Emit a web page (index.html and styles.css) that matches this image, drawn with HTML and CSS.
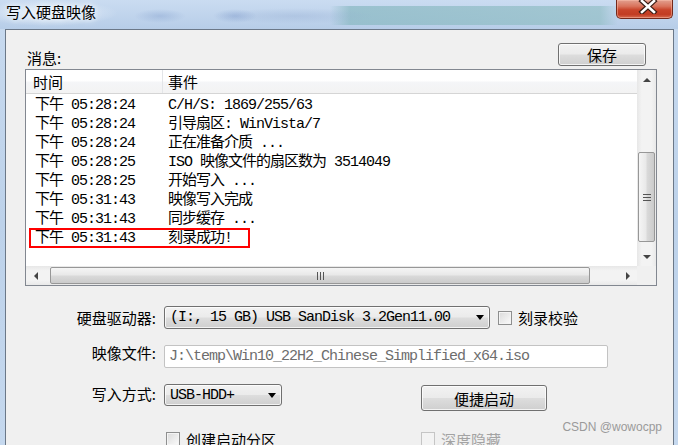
FILE: index.html
```html
<!DOCTYPE html>
<html lang="zh-CN">
<head>
    <meta charset="UTF-8">
    <meta name="viewport" content="width=device-width, initial-scale=1.0">
    <title>写入硬盘映像</title>
    <link rel="stylesheet" href="styles.css">
</head>
<body>

<div class="window">
    <div class="titlebar">
        <span class="title">写入硬盘映像</span>
        <!--close button, the X is drawn twice: dark outline then white-->
        <button class="close">
            <svg width="24" height="14" viewBox="0 0 24 14">
                <path d="M6 1 L18 12 M18 1 L6 12" stroke="#3b1d16" stroke-width="5" stroke-linecap="square"/>
                <path d="M6 1 L18 12 M18 1 L6 12" stroke="#ffffff" stroke-width="2.6" stroke-linecap="square"/>
            </svg>
        </button>
    </div>

    <div class="frame">
        <div class="client">

            <div class="top-row">
                <span class="msg-label">消息:</span>
                <button class="btn save">保存</button>
            </div>

            <div class="listview">
                <div class="list-pane">
                    <div class="list-header">
                        <span class="head-time">时间</span>
                        <span class="head-event">事件</span>
                    </div>
                    <div class="row"><span class="cell-time">下午 05:28:24</span><span>C/H/S: 1869/255/63</span></div>
                    <div class="row"><span class="cell-time">下午 05:28:24</span><span>引导扇区: WinVista/7</span></div>
                    <div class="row"><span class="cell-time">下午 05:28:24</span><span>正在准备介质 ...</span></div>
                    <div class="row"><span class="cell-time">下午 05:28:25</span><span>ISO 映像文件的扇区数为 3514049</span></div>
                    <div class="row"><span class="cell-time">下午 05:28:25</span><span>开始写入 ...</span></div>
                    <div class="row"><span class="cell-time">下午 05:31:43</span><span>映像写入完成</span></div>
                    <div class="row"><span class="cell-time">下午 05:31:43</span><span>同步缓存 ...</span></div>
                    <div class="row marked"><span class="cell-time">下午 05:31:43</span><span>刻录成功!</span></div>
                </div>

                <div class="vscroll">
                    <span class="sb-btn"><i class="tri tri-up"></i></span>
                    <span class="v-track"><span class="thumb v-thumb"><i class="grip-h"></i></span></span>
                    <span class="sb-btn"><i class="tri tri-down"></i></span>
                </div>
                <div class="hscroll">
                    <span class="sb-btn"><i class="tri tri-left"></i></span>
                    <span class="h-track"><span class="thumb h-thumb"><i class="grip-v"></i></span></span>
                    <span class="sb-btn"><i class="tri tri-right"></i></span>
                </div>
                <div class="corner"></div>
            </div>

            <div class="form">
                <span class="field-label">硬盘驱动器:</span>
                <div class="field">
                    <div class="combo combo-drive"><span>(I:, 15 GB) USB SanDisk 3.2Gen11.00</span><i class="arrow"></i></div>
                    <span class="check check-verify"><i class="box"></i>刻录校验</span>
                </div>

                <span class="field-label lift">映像文件:</span>
                <div class="field">
                    <div class="textbox">J:\temp\Win10_22H2_Chinese_Simplified_x64.iso</div>
                </div>

                <span class="field-label lift">写入方式:</span>
                <div class="field field-mode">
                    <div class="combo combo-mode"><span>USB-HDD+</span><i class="arrow"></i></div>
                    <button class="btn quick">便捷启动</button>
                </div>

                <span></span>
                <div class="field field-checks">
                    <span class="check check-boot"><i class="box"></i>创建启动分区</span>
                    <span class="check disabled"><i class="box"></i>深度隐藏</span>
                </div>
            </div>

        </div>
    </div>

    <span class="watermark">CSDN @wowocpp</span>
</div>

</body>
</html>
```

FILE: styles.css
```css
* { box-sizing: border-box; }
body { margin: 0; width: 678px; height: 445px; overflow: hidden; font-family: "Noto Sans CJK SC", sans-serif; font-size: 15px; color: #000; }

/* window frame + aero glass */
.window { position: relative; width: 678px; height: 445px; display: flex; flex-direction: column;
    background: linear-gradient(180deg, #c8daef 0%, #bdd2ea 50%, #c5d8ee 100%); }
.titlebar { height: 29px; flex: none; display: flex; justify-content: space-between; align-items: flex-start;
    background:
        radial-gradient(ellipse 70px 13px at 48px 13px, rgba(236,244,252,0.95), rgba(236,244,252,0)),
        radial-gradient(ellipse 26px 7px at 160px 16px, rgba(120,150,200,0.35), rgba(120,150,200,0)),
        radial-gradient(ellipse 22px 7px at 235px 16px, rgba(110,140,195,0.35), rgba(110,140,195,0)),
        radial-gradient(ellipse 80px 8px at 295px 16px, rgba(140,165,205,0.3), rgba(140,165,205,0)),
        linear-gradient(90deg, rgba(140,186,196,0) 330px, rgba(140,186,196,0.75) 350px, rgba(150,192,200,0.75) 600px, rgba(150,192,200,0) 618px) 0 6px / 100% 19px no-repeat,
        linear-gradient(180deg, #cadcf1 0%, #b7cde8 100%); }
.title { padding-left: 6px; line-height: 24px; font-size: 15px; text-shadow: 0 0 8px #f2f7fd, 0 0 4px #f2f7fd; }
.close { width: 57px; height: 19px; margin-right: 5px; padding: 0; display: flex; justify-content: center; align-items: flex-start;
    border: 1px solid #74291b; border-top: none; border-radius: 0 0 5px 5px;
    background: linear-gradient(180deg, #e2a08f 0%, #d9735c 35%, #c8442a 55%, #c23c22 80%, #d66a4f 100%);
    box-shadow: inset 0 0 0 1px rgba(255,200,180,0.45); }
.close svg { display: block; margin-left: 6px; }

.frame { flex: 1; min-height: 0; display: flex; padding: 0 4px 0 5px; }
.client { flex: 1; display: flex; flex-direction: column; background: #f0f0f0;
    border: 1px solid #6b7888; border-bottom: none; padding: 13px 16px 0 19px; }

/* message header row */
.top-row { height: 23px; display: flex; justify-content: space-between; align-items: flex-end; }
.msg-label { margin-left: 2px; line-height: 17px; }
.btn { font-family: "Noto Sans CJK SC", sans-serif; font-size: 15px; color: #000; padding: 0; line-height: 1;
    border: 1px solid #707070; border-radius: 3px;
    background: linear-gradient(180deg, #f2f2f2 0%, #ebebeb 48%, #dddddd 52%, #cfcfcf 100%);
    box-shadow: inset 0 0 0 1px rgba(255,255,255,0.75); }
.save { width: 88px; height: 23px; margin-right: 11px; }

/* list view */
.listview { margin-top: 3px; height: 217px; flex: none; border: 1px solid #828790; background: #fff;
    display: grid; grid-template-columns: 1fr 19px; grid-template-rows: 1fr 19px; }
.list-pane { overflow: hidden; font-family: "Liberation Mono", "Noto Sans CJK SC", monospace; font-size: 15px; letter-spacing: -1px; }
.list-header { height: 24px; display: flex; border-bottom: 1px solid #d5d5d5; margin-bottom: 2px;
    background: linear-gradient(180deg, #ffffff 0%, #ffffff 45%, #f4f5f7 55%, #f3f3f3 100%);
    font-family: "Noto Sans CJK SC", sans-serif; letter-spacing: 0; line-height: 23px; }
.head-time { width: 137px; padding-left: 7px; border-right: 1px solid #e3e5e8; }
.head-event { padding-left: 5px; }
.row { position: relative; height: 19px; line-height: 20px; display: flex; padding-left: 9px; white-space: nowrap; }
.cell-time { width: 133px; flex: none; }
.row.marked::after { content: ""; position: absolute; left: 3px; top: -1px; width: 217px; height: 16px; border: 2px solid #f00; }

/* scrollbars */
.vscroll { display: flex; flex-direction: column; background: linear-gradient(90deg, #e7e7e7 0%, #f3f3f3 25%, #f3f3f3 75%, #e9e9e9 100%); }
.hscroll { display: flex; background: linear-gradient(180deg, #e7e7e7 0%, #f3f3f3 25%, #f3f3f3 75%, #e9e9e9 100%); }
.corner { background: #f0f0f0; }
.sb-btn { flex: none; width: 19px; height: 19px; display: flex; align-items: center; justify-content: center; }
.tri { display: block; width: 0; height: 0; }
.tri-up { border-left: 4px solid transparent; border-right: 4px solid transparent; border-bottom: 4px solid #444; }
.tri-down { border-left: 4px solid transparent; border-right: 4px solid transparent; border-top: 4px solid #444; }
.tri-left { border-top: 4px solid transparent; border-bottom: 4px solid transparent; border-right: 4px solid #444; }
.tri-right { border-top: 4px solid transparent; border-bottom: 4px solid transparent; border-left: 4px solid #444; }
.v-track { flex: 1; }
.h-track { flex: 1; display: flex; }
.thumb { display: flex; align-items: center; justify-content: center; border: 1px solid #979797; border-radius: 2px; }
.v-thumb { margin: 63px 1px 0; height: 90px;
    background: linear-gradient(90deg, #f5f5f5 0%, #e9e9e9 45%, #d9d9d9 55%, #cbcbcb 100%); }
.h-thumb { margin: 1px 0 1px 5px; width: 540px;
    background: linear-gradient(180deg, #f5f5f5 0%, #e9e9e9 45%, #d9d9d9 55%, #cbcbcb 100%); }
.grip-h { display: block; width: 8px; height: 7px;
    background: repeating-linear-gradient(180deg, #555 0 1px, transparent 1px 3px); }
.grip-v { display: block; width: 7px; height: 8px;
    background: repeating-linear-gradient(90deg, #555 0 1px, transparent 1px 3px); }

/* form below the list */
.form { margin-top: 20px; display: grid; grid-template-columns: 150px 1fr; column-gap: 8px; row-gap: 16px;
    grid-template-rows: 23px 23px 27px auto; margin-left: -19px; }
.field-label { display: flex; align-items: center; justify-content: flex-end; white-space: nowrap; }
.field-label.lift { padding-bottom: 8px; }
.field { display: flex; align-items: center; }
.combo { position: relative; display: flex; align-items: center; padding-left: 5px;
    font-family: "Liberation Mono", "Noto Sans CJK SC", monospace; letter-spacing: -1px; white-space: nowrap;
    border: 1px solid #707070; border-radius: 3px;
    background: linear-gradient(180deg, #f2f2f2 0%, #ebebeb 48%, #dddddd 52%, #cfcfcf 100%);
    box-shadow: inset 0 0 0 1px rgba(255,255,255,0.75); }
.combo span { flex: 1; }
.arrow { display: block; width: 0; height: 0; margin-right: 5px;
    border-left: 4px solid transparent; border-right: 4px solid transparent; border-top: 5px solid #000; }
.combo-drive { width: 326px; height: 23px; }
.combo-mode { width: 118px; height: 22px; }
.check { display: flex; align-items: center; gap: 6px; white-space: nowrap; }
.check-verify { margin-left: 8px; }
.box { display: block; width: 14px; height: 14px; border: 1px solid #8e8f8f;
    background: linear-gradient(135deg, #dadada 0%, #eeeeee 60%, #fbfbfb 100%);
    box-shadow: inset 0 0 0 1px #f4f4f4; }
.textbox { width: 444px; height: 23px; display: flex; align-items: center; padding-left: 4px;
    border: 1px solid #c3c3c3; border-radius: 2px; background: #fff; color: #6d6d6d;
    font-family: "Liberation Mono", monospace; letter-spacing: -1px; white-space: nowrap; }
.field-mode { align-items: flex-start; }
.quick { width: 126px; height: 26px; margin: 1px 0 0 139px; }
.field-checks { align-items: flex-start; margin-top: 5px; }
.field-checks .check { line-height: 15px; align-items: flex-start; }
.check-boot { width: 255px; margin-left: 2px; }
.disabled { color: #a3a3a3; }
.disabled .box { border-color: #c5c5c5; background: #f3f3f3; box-shadow: none; }

.watermark { position: absolute; right: 16px; top: 420px; font-family: "Liberation Sans", Arial, sans-serif; font-size: 12px; color: #9a9a9a; }
```
